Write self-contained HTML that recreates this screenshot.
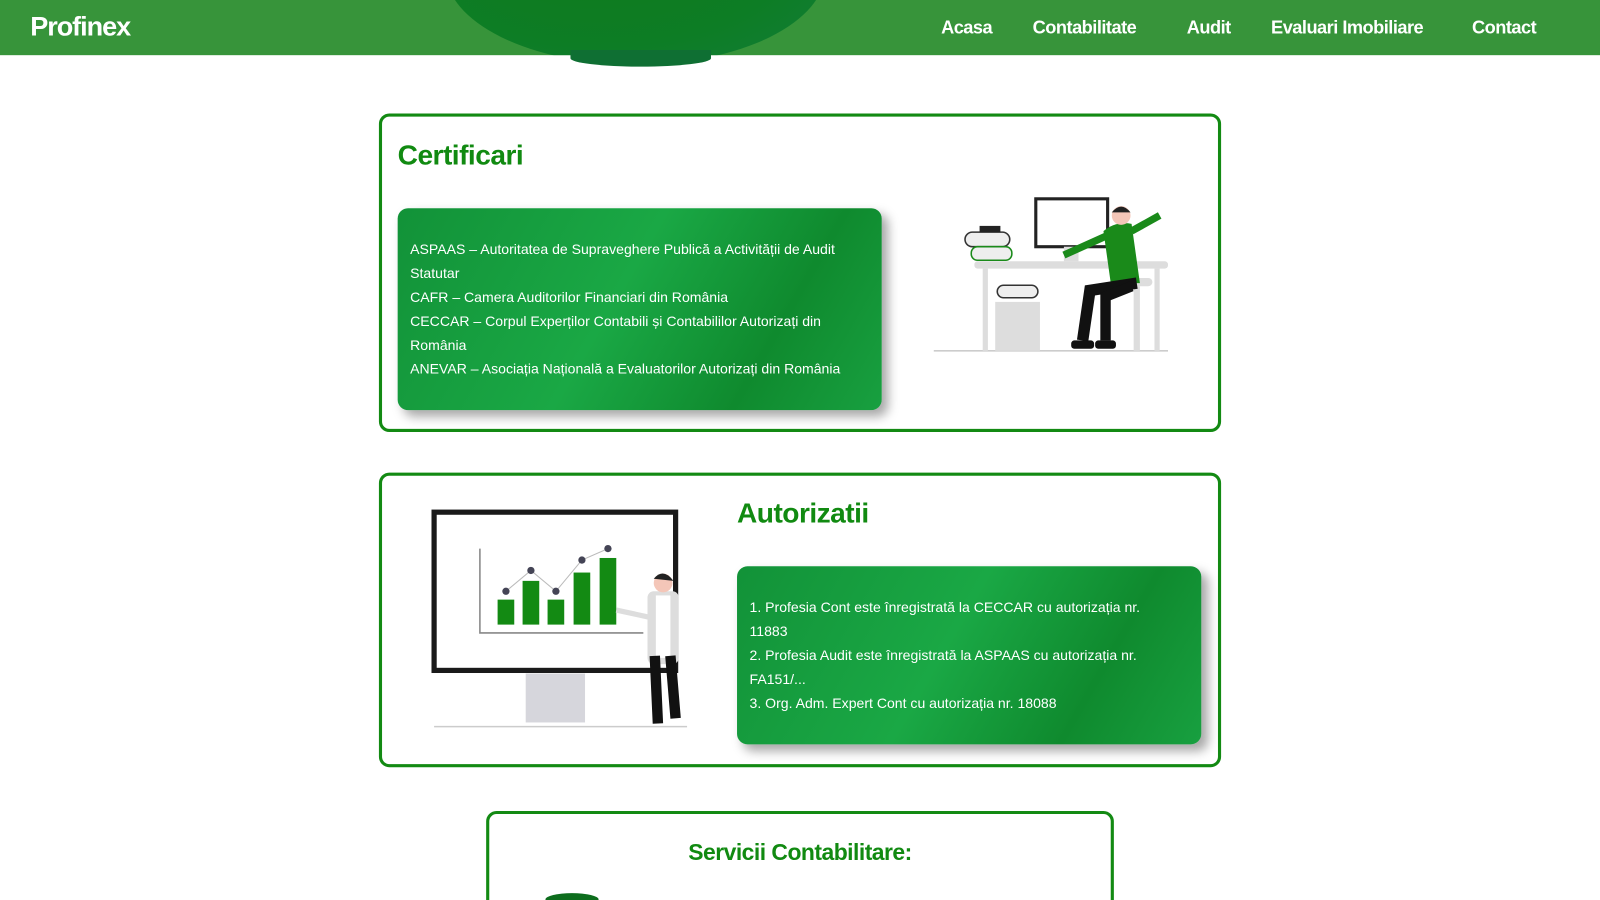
<!DOCTYPE html>
<html style="overflow:hidden;height:900px"><head><meta charset="utf-8"><style>
*{margin:0;padding:0;box-sizing:border-box}
html,body{overflow:hidden}
body{width:1600px;height:900px;background:#fff;font-family:"Liberation Sans",sans-serif;position:relative}
#w{position:absolute;left:0;top:0;width:1537px;height:865px;overflow:hidden;transform:scale(1.041);transform-origin:0 0}
.hdr{position:absolute;left:0;top:0;width:1600px;height:53px;background:#37943a;overflow:hidden}
.blob{position:absolute;left:428px;width:365px;height:180px;border-radius:50%;background:radial-gradient(ellipse at 40% 40%,#0f7a1c,#0d7d25 60%,#137d3a);}
.logo{position:absolute;left:29px;top:10px;color:#fff;font-size:26px;font-weight:bold;letter-spacing:-1px}
.nav{position:absolute;top:16px;color:#fff;font-size:17.5px;font-weight:bold;letter-spacing:-0.5px}
.card{position:absolute;border:3px solid #138a13;border-radius:10px;background:#fff}
h2{position:absolute;color:#118a11;font-size:27px;font-weight:bold;letter-spacing:-0.5px}
.gbox{position:absolute;border-radius:10px;background:linear-gradient(120deg,#129238 0%,#1aa845 45%,#0f8a2e 75%,#18a040 100%);box-shadow:6px 6px 10px rgba(0,0,0,.35);color:#fff;font-size:13.5px;line-height:23px;padding:0 12px}
</style></head><body><div id="w">
<div class="hdr"><div class="blob" style="top:-118px"></div>
<div class="logo">Profinex</div>
<div class="nav" style="left:904px">Acasa</div>
<div class="nav" style="left:992px">Contabilitate</div>
<div class="nav" style="left:1140px">Audit</div>
<div class="nav" style="left:1221px">Evaluari Imobiliare</div>
<div class="nav" style="left:1414px">Contact</div>
</div>
<div style="position:absolute;left:548px;top:48px;width:135px;height:16px;border-radius:0 0 50% 50%;background:#0f6f33"></div>

<div class="card" style="left:364px;top:109px;width:809px;height:306px"></div>
<h2 style="left:382px;top:134px">Certificari</h2>
<div class="gbox" style="left:382px;top:200px;width:465px;height:194px;padding-top:28px">ASPAAS – Autoritatea de Supraveghere Publică a Activității de Audit Statutar<br>CAFR – Camera Auditorilor Financiari din România<br>CECCAR – Corpul Experților Contabili și Contabililor Autorizați din România<br>ANEVAR – Asociația Națională a Evaluatorilor Autorizați din România</div>
<svg style="position:absolute;left:882px;top:167px" width="255" height="186">
<line x1="15" y1="170" x2="240" y2="170" stroke="#ccc" stroke-width="1.5"/>
<rect x="54" y="84" width="186" height="7" rx="3" fill="#ddd"/>
<rect x="62" y="91" width="5" height="79" fill="#ddd"/><rect x="227" y="91" width="5" height="79" fill="#ddd"/>
<rect x="74" y="123" width="43" height="47" fill="#ddd"/>
<rect x="76" y="107" width="39" height="12" rx="6" fill="#eee" stroke="#333" stroke-width="1.5"/>
<rect x="45" y="56" width="43" height="14" rx="7" fill="#eee" stroke="#333" stroke-width="1.5"/>
<rect x="51" y="70" width="39" height="13" rx="6" fill="#eee" stroke="#1a8a1a" stroke-width="1.5"/>
<rect x="59" y="50" width="20" height="6" fill="#222"/>
<rect x="113" y="24" width="69" height="46" fill="#fff" stroke="#222" stroke-width="3"/>
<rect x="140" y="70" width="14" height="14" fill="#ddd"/>
<rect x="195" y="100" width="30" height="8" rx="4" fill="#ddd"/>
<rect x="207" y="108" width="6" height="62" fill="#ddd"/>
<path d="M178 55 Q190 45 205 48 L213 105 L185 105 Z" fill="#1a8a1a"/>
<path d="M205 55 L232 40" stroke="#1a8a1a" stroke-width="7"/>
<path d="M180 60 L140 78" stroke="#1a8a1a" stroke-width="7"/>
<path d="M210 105 L165 112 L158 160" stroke="#111" stroke-width="11" fill="none"/>
<path d="M205 108 L180 118 L180 160" stroke="#111" stroke-width="10" fill="none"/>
<circle cx="195" cy="40" r="9" fill="#f4c6b8"/><path d="M186 37 Q195 26 204 37" fill="#222"/>
<rect x="147" y="160" width="22" height="8" rx="3" fill="#111"/><rect x="170" y="160" width="20" height="8" rx="3" fill="#111"/>
</svg>

<div class="card" style="left:364px;top:454px;width:809px;height:283px"></div>
<svg style="position:absolute;left:402px;top:480px" width="275" height="235">
<rect x="15" y="12" width="232" height="152" fill="#fff" stroke="#1a1a1a" stroke-width="5"/>
<rect x="103" y="167" width="57" height="47" fill="#d6d6dc"/>
<line x1="15" y1="218" x2="258" y2="218" stroke="#ccc" stroke-width="1.5"/>
<path d="M59 47 V128 H216" stroke="#888" fill="none" stroke-width="1.5"/>
<rect x="76" y="96" width="16" height="24" fill="#138a13"/><rect x="100" y="78" width="16" height="42" fill="#138a13"/><rect x="124" y="96" width="16" height="24" fill="#138a13"/><rect x="149" y="70" width="16" height="50" fill="#138a13"/><rect x="174" y="56" width="16" height="64" fill="#138a13"/>
<polyline points="84,88 108,68 132,88 157,58 182,47" stroke="#bbb" fill="none"/>
<g fill="#445"><circle cx="84" cy="88" r="3.5"/><circle cx="108" cy="68" r="3.5"/><circle cx="132" cy="88" r="3.5"/><circle cx="157" cy="58" r="3.5"/><circle cx="182" cy="47" r="3.5"/></g>
<rect x="220" y="88" width="30" height="70" rx="6" fill="#ddd"/>
<rect x="228" y="92" width="14" height="60" fill="#fff"/>
<path d="M227 150 L230 215 M242 150 L247 210" stroke="#111" stroke-width="10"/>
<path d="M190 106 L222 113" stroke="#ddd" stroke-width="5"/>
<circle cx="235" cy="80" r="9" fill="#f4c6b8"/><path d="M226 76 Q235 65 245 78" fill="#222"/>
</svg>
<h2 style="left:708px;top:478px">Autorizatii</h2>
<div class="gbox" style="left:708px;top:544px;width:446px;height:171px;padding-top:28px;padding-right:24px">1. Profesia Cont este înregistrată la CECCAR cu autorizația nr. 11883<br>2. Profesia Audit este înregistrată la ASPAAS cu autorizația nr. FA151/...<br>3. Org. Adm. Expert Cont cu autorizația nr. 18088</div>

<div class="card" style="left:467px;top:779px;width:603px;height:150px"></div>
<div style="position:absolute;left:467px;width:603px;top:806px;text-align:center;color:#118a11;font-size:22px;font-weight:bold;letter-spacing:-0.5px">Servicii Contabilitare:</div>
<div style="position:absolute;left:524px;top:858px;width:51px;height:12px;border-radius:50% 50% 0 0;background:#0d6d1d"></div>
</div></body></html>
